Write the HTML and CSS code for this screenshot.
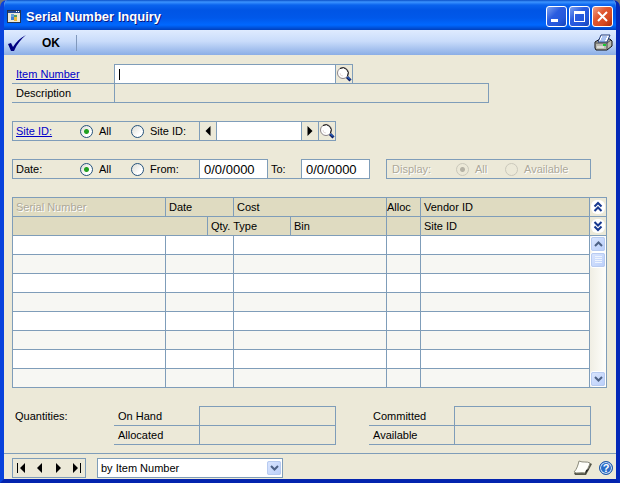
FILE: index.html
```html
<!DOCTYPE html>
<html lang="en">
<head>
<meta charset="utf-8">
<title>Serial Number Inquiry</title>
<link rel="stylesheet" href="styles.css">
</head>
<body>
<svg class="symbols" aria-hidden="true">
  <symbol id="lens" viewBox="0 0 16 18">
    <circle cx="7" cy="8" r="5.500" fill="#fff" stroke="#8d8589"/>
    <path d="M4 3.500A5.500 5.500 0 0 1 11.500 11" fill="none" stroke="#111"/>
    <path d="M4 8a3 3 0 0 0 3 3" fill="none" stroke="#e6dcdc"/>
    <path d="M11 12l3.500 3.500" stroke="#0a1c66" stroke-width="3"/>
    <path d="M11.500 12l2.500 2.500" stroke="#3c8cf0" stroke-width="1"/>
  </symbol>
  <symbol id="left" viewBox="0 0 6 10"><path d="M5.500 0v10L.5 5z"/></symbol>
  <symbol id="right" viewBox="0 0 6 10"><path d="M.5 0v10l5-5z"/></symbol>
</svg>
<div class="window">
  <header class="titlebar">
    <svg class="app-icon" viewBox="0 0 14 13" aria-hidden="true">
      <rect x=".5" y=".5" width="13" height="12" fill="#ece9d8" stroke="#24344f"/>
      <path d="M1 1h12v2H1z" fill="#244a94"/><path d="M9 1h1v1H9zM11 1h1v1h-1z" fill="#fff"/>
      <path d="M4 4h3v3H4z" fill="#6aa0d8"/><path d="M7 5h3v2H7z" fill="#4b9c66"/>
      <path d="M4 7h3v3H4z" fill="#3f7fd0"/><path d="M7 7h3v4H7z" fill="#e8b93c"/>
    </svg>
    <h1>Serial Number Inquiry</h1>
    <div class="controls">
      <button type="button" aria-label="Minimize"><svg viewBox="0 0 19 19"><path d="M4 12h7v3H4z" fill="#fff"/></svg></button>
      <button type="button" aria-label="Maximize"><svg viewBox="0 0 19 19"><path d="M4 4h11v11H4zm1 3v7h9V7z" fill="#fff" fill-rule="evenodd"/></svg></button>
      <button type="button" class="close" aria-label="Close"><svg viewBox="0 0 19 19"><path d="M5 5l9 9M14 5l-9 9" stroke="#fff" stroke-width="2"/></svg></button>
    </div>
  </header>
  <div class="toolbar">
    <button type="button" class="ok">
      <svg viewBox="0 0 20 18" aria-hidden="true"><path d="M1 10l3-1 2 4C9 8 13 4 19 1 14 5 10 10 7 17H4z" fill="#000080"/></svg>
      <span>OK</span>
    </button>
    <button type="button" class="print" aria-label="Print">
      <svg viewBox="0 0 19 17">
        <path d="M1 8l5-3h10l2 2v5l-5 4H2l-1-2z" fill="#b9b9b0" stroke="#111"/>
        <path d="M2 9h11l4-3M13 9v6" fill="none" stroke="#444"/>
        <path d="M4 8l3-7h9l-3 7z" fill="#fff" stroke="#223b77"/>
        <path d="M8 3h5M7 5h5M6 7h5" stroke="#5686df"/>
        <path d="M3 13h7" stroke="#fff"/><path d="M9 11h3" stroke="#18c934" stroke-width="2"/>
      </svg>
    </button>
  </div>

  <main class="form">
    <section class="stack">
      <div class="line">
        <label class="caption link" for="item">Item Number</label>
        <input class="cell item-input" id="item" type="text">
        <button type="button" class="cell small" aria-label="Look up item"><svg class="lens"><use href="#lens"/></svg></button>
      </div>
      <div class="line">
        <label class="caption" for="description">Description</label>
        <input class="cell description readonly" id="description" type="text" readonly>
      </div>
    </section>

    <div class="line">
      <fieldset class="cell choices">
        <a class="choice-name link" href="#site">Site ID:</a>
        <label class="first"><input type="radio" name="site" checked>All</label>
        <label><input type="radio" name="site">Site ID:</label>
      </fieldset>
      <button type="button" class="cell small" aria-label="Previous site"><svg class="arrow"><use href="#left"/></svg></button>
      <input class="cell site-input" id="site" type="text" aria-label="Site ID">
      <button type="button" class="cell small" aria-label="Next site"><svg class="arrow"><use href="#right"/></svg></button>
      <button type="button" class="cell small" aria-label="Look up site"><svg class="lens"><use href="#lens"/></svg></button>
    </div>

    <div class="line">
      <fieldset class="cell choices">
        <span class="choice-name">Date:</span>
        <label class="first"><input type="radio" name="date" checked>All</label>
        <label><input type="radio" name="date">From:</label>
      </fieldset>
      <input class="cell date" type="text" value="0/0/0000" aria-label="From date">
      <label class="to" for="to-date">To:</label>
      <input class="cell date" id="to-date" type="text" value="0/0/0000">
      <fieldset class="cell display" disabled>
        <span class="choice-name">Display:</span>
        <label class="first"><input type="radio" name="display" checked>All</label>
        <label><input type="radio" name="display">Available</label>
      </fieldset>
    </div>

    <div class="grid">
      <table>
        <colgroup><col class="c-serial"><col class="c-date"><col class="c-qty"><col class="c-type"><col class="c-bin"><col class="c-alloc"><col></colgroup>
        <thead>
          <tr><th class="off">Serial Number</th><th colspan="2">Date</th><th colspan="2">Cost</th><th class="tight">Alloc</th><th>Vendor ID</th></tr>
          <tr><th colspan="2"></th><th colspan="2">Qty. Type</th><th>Bin</th><th></th><th>Site ID</th></tr>
        </thead>
        <tbody>
          <tr><td></td><td colspan="2"></td><td colspan="2"></td><td></td><td></td></tr>
          <tr><td></td><td colspan="2"></td><td colspan="2"></td><td></td><td></td></tr>
          <tr><td></td><td colspan="2"></td><td colspan="2"></td><td></td><td></td></tr>
          <tr><td></td><td colspan="2"></td><td colspan="2"></td><td></td><td></td></tr>
          <tr><td></td><td colspan="2"></td><td colspan="2"></td><td></td><td></td></tr>
          <tr><td></td><td colspan="2"></td><td colspan="2"></td><td></td><td></td></tr>
          <tr><td></td><td colspan="2"></td><td colspan="2"></td><td></td><td></td></tr>
          <tr><td></td><td colspan="2"></td><td colspan="2"></td><td></td><td></td></tr>
        </tbody>
      </table>
      <div class="side">
        <button type="button" class="fold" aria-label="Hide detail"><svg viewBox="0 0 14 14"><path d="M3.500 6.500L7 3l3.500 3.500M3.500 11L7 7.500l3.500 3.500"/></svg></button>
        <button type="button" class="fold" aria-label="Show detail"><svg viewBox="0 0 14 14"><path d="M3.500 3L7 6.500 10.500 3M3.500 7.500L7 11l3.500-3.500"/></svg></button>
        <div class="scrollbar">
          <button type="button" class="scroll" aria-label="Scroll up"><svg viewBox="0 0 9 6"><path d="M1 5l3.500-3.500L8 5"/></svg></button>
          <div class="thumb"><svg viewBox="0 0 7 8"><path d="M0 .5h7M0 2.500h7M0 4.500h7M0 6.500h7" stroke="#eef4fe"/></svg></div>
          <button type="button" class="scroll down" aria-label="Scroll down"><svg viewBox="0 0 9 6"><path d="M1 1l3.500 3.500L8 1"/></svg></button>
        </div>
      </div>
    </div>

    <section class="quantities">
      <span class="heading">Quantities:</span>
      <div class="stack pair">
        <div class="line"><label class="caption" for="hand">On Hand</label><input class="cell amount readonly" id="hand" readonly></div>
        <div class="line"><label class="caption" for="allocated">Allocated</label><input class="cell amount readonly" id="allocated" readonly></div>
      </div>
      <div class="stack pair">
        <div class="line"><label class="caption" for="committed">Committed</label><input class="cell amount readonly" id="committed" readonly></div>
        <div class="line"><label class="caption" for="available">Available</label><input class="cell amount readonly" id="available" readonly></div>
      </div>
    </section>
  </main>

  <footer class="footer">
    <nav class="records" aria-label="Records">
      <button type="button" aria-label="First"><svg viewBox="0 0 10 10"><path d="M1 0h1v10H1zM9 0v10L4 5z"/></svg></button>
      <button type="button" aria-label="Previous"><svg viewBox="0 0 10 10"><path d="M7 0v10L2 5z"/></svg></button>
      <button type="button" aria-label="Next"><svg viewBox="0 0 10 10"><path d="M3 0v10l5-5z"/></svg></button>
      <button type="button" aria-label="Last"><svg viewBox="0 0 10 10"><path d="M8 0h1v10H8zM1 0v10l5-5z"/></svg></button>
    </nav>
    <div class="sort">
      <select aria-label="Sort order"><option>by Item Number</option></select>
      <span class="drop"><svg viewBox="0 0 9 6"><path d="M1 1l3.500 3.500L8 1"/></svg></span>
    </div>
    <div class="extras">
      <button type="button" aria-label="Note">
        <svg class="note" viewBox="0 0 19 16"><path d="M17 3l2 1-6 11H2l-1-2z" fill="#555648"/><path d="M6 1c4 2 8 0 11 2-1 4-3 7-5 10-4-1-8 1-11-1 3-3 4-7 5-11z" fill="#fffffa" stroke="#8c8c7c"/><path d="M12 14l1-4 3-1z" fill="#222"/></svg>
      </button>
      <button type="button" aria-label="Help" class="help">?</button>
    </div>
  </footer>
</div>
</body>
</html>
```
FILE: styles.css
```css
:root {
  --line: #7f9db9;
  --face: #ece9d8;
  --head: #dfdbc1;
}
* { box-sizing: border-box; }
body {
  margin: 0;
  background: #777;
  color: #000;
  font: 11px/18px "Liberation Sans", Arial, sans-serif;
}
button, input, select {
  margin: 0;
  padding: 0;
  border: 0;
  border-radius: 0;
  background: none;
  color: inherit;
  font: inherit;
}
button { display: flex; align-items: center; justify-content: center; }
svg { display: block; }
.symbols { display: none; }
.link { color: #0000c8; text-decoration: underline; }

.window {
  min-height: 100vh;
  border: 4px solid #0842dc;
  border-top: 0;
  border-right-color: #0428b8;
  border-bottom-color: #0424ae;
  border-radius: 7px 7px 0 0;
  background: var(--face);
  overflow: hidden;
}

.titlebar {
  display: flex;
  align-items: center;
  gap: 5px;
  height: 30px;
  margin: 0 -4px;
  padding: 3px 7px 0;
  background: linear-gradient(#0a50c8 0, #3c94ff 2px, #0a64ee 5px, #0055e5 10px, #0058ea 18px, #0068ff 25px, #0050d8 28px, #0040bc 30px);
}
.app-icon { width: 14px; height: 13px; }
.titlebar h1 {
  flex: 1;
  margin: 0;
  color: #fff;
  font-size: 13px;
  font-weight: bold;
  text-shadow: 1px 1px 0 #0a1883;
}
.controls { display: flex; gap: 2px; }
.controls button {
  width: 21px;
  height: 21px;
  border: 1px solid #fff;
  border-radius: 3px;
  background: linear-gradient(135deg, #7da2f0, #2a5ce0 40%, #2458dc 70%, #1644b8);
}
.controls .close { background: linear-gradient(135deg, #f0a088, #e0562f 40%, #d64a22 70%, #aa2c0c); }
.controls svg { width: 19px; height: 19px; }

.toolbar {
  display: flex;
  align-items: center;
  justify-content: space-between;
  height: 25px;
  padding: 0 3px;
  background: linear-gradient(#dfebff, #c9dcfa 45%, #8baee6);
}
.ok {
  gap: 15px;
  height: 16px;
  padding-right: 16px;
  border-right: 1px solid #8098bc;
  font-size: 12px;
  font-weight: bold;
}
.ok svg { width: 20px; height: 18px; }
.print svg { width: 19px; height: 17px; }

.form {
  display: flex;
  flex-direction: column;
  gap: 18px;
  padding: 9px 9px 8px 8px;
}
.line { display: flex; }
.stack .line + .line { margin-top: -1px; }
.cell {
  height: 20px;
  margin: 0 -1px 0 0;
  border: 1px solid var(--line);
}
input.cell { padding: 0 4px; background: #fff; }
input.readonly { background: none; }
.small { width: 18px; }
.caption {
  width: 102px;
  height: 20px;
  padding: 1px 4px 0;
  border-bottom: 1px solid var(--line);
}
.lens { width: 16px; height: 18px; }
.arrow { width: 6px; height: 10px; }
.item-input { width: 222px; }
input.item-input {
  background: linear-gradient(#000, #000) 4px 4px / 1px 11px no-repeat #fff;
}
.description { width: 375px; }
.site-input { width: 86px; }
.date { width: 69px; font-size: 13px; }
.to {
  width: 35px;
  height: 20px;
  margin-right: -1px;
  padding: 1px 4px 0;
  border-bottom: 1px solid var(--line);
}

fieldset { display: flex; min-width: 0; padding: 0; }
.choices { width: 188px; }
.choice-name { width: 67px; padding-left: 3px; }
fieldset label { display: flex; align-items: center; gap: 6px; }
.first { width: 51px; }
input[type="radio"] {
  flex: none;
  width: 13px;
  height: 13px;
  appearance: none;
  border: 1px solid #24527c;
  border-radius: 50%;
  background: linear-gradient(135deg, #dcdcd4, #fff 70%);
}
input[type="radio"]:checked {
  background: radial-gradient(circle at 50% 50%, #21a121 0 2px, #fff0 3px), linear-gradient(135deg, #dcdcd4, #fff 70%);
}
.display { width: 205px; margin-left: 17px; }
.display .choice-name { width: 69px; padding-left: 5px; }
.display .first { width: 49px; }
.display, .off { color: #aca899; text-shadow: 1px 1px 0 #fff; }
.display input[type="radio"] { border-color: #cac8bb; background: none; }
.display input[type="radio"]:checked { background: radial-gradient(circle at 50% 50%, #b5b2a5 0 2px, #fff0 3px); }

.grid { display: flex; }
table {
  flex: 1;
  width: 0;
  border-collapse: separate;
  border-spacing: 0;
  border-top: 1px solid var(--line);
  border-left: 1px solid var(--line);
  table-layout: fixed;
}
.c-serial { width: 153px; }
.c-date { width: 42px; }
.c-qty { width: 26px; }
.c-type { width: 57px; }
.c-bin { width: 96px; }
.c-alloc { width: 34px; }
th, td {
  height: 19px;
  padding: 0 3px;
  border-right: 1px solid var(--line);
  border-bottom: 1px solid var(--line);
  font-weight: normal;
  text-align: left;
  white-space: nowrap;
}
th { background: var(--head); }
th.tight { padding: 0; }
td { background: #fff; }
tr:nth-child(even) td { background: #f7f7f3; }
.side {
  display: flex;
  flex-direction: column;
  width: 17px;
  border: solid var(--line);
  border-width: 1px 1px 1px 0;
}
.fold {
  height: 19px;
  border-bottom: 1px solid var(--line);
}
.fold svg { width: 14px; height: 14px; border-radius: 6px; background: #fff; }
.fold path { fill: none; stroke: #16388f; stroke-width: 2; }
.scrollbar {
  display: flex;
  flex: 1;
  flex-direction: column;
  background: linear-gradient(90deg, #f0eee4, #fefefb);
}
.scroll, .thumb, .drop {
  display: flex;
  align-items: center;
  justify-content: center;
  width: 16px;
  height: 16px;
  border: 1px solid #fff;
  border-radius: 3px;
  outline: 1px solid #b8cbf0;
  outline-offset: -2px;
  background: linear-gradient(135deg, #dbe6fe, #b9cefa);
}
.down { margin-top: auto; }
.scroll svg, .drop svg { width: 9px; height: 6px; }
.scroll path, .drop path { fill: none; stroke: #4d6185; stroke-width: 2; }
.thumb svg { width: 7px; height: 8px; }

.quantities { display: flex; gap: 33px; }
.heading { width: 69px; padding: 1px 3px 0; }
.pair .caption { width: 85px; }
.amount { width: 137px; }
.pair .cell { margin: 0; }

.footer {
  display: flex;
  gap: 11px;
  padding: 4px 8px 1px;
  border-top: 1px solid var(--line);
}
.records {
  display: flex;
  align-items: center;
  justify-content: space-between;
  width: 74px;
  height: 20px;
  padding: 0 3px;
  border: 1px solid var(--line);
}
.records svg { width: 10px; height: 10px; }
.sort { position: relative; width: 186px; }
.sort select {
  width: 100%;
  height: 20px;
  padding: 0 20px 0 3px;
  appearance: none;
  border: 1px solid var(--line);
  background: #fff;
}
.drop {
  position: absolute;
  top: 2px;
  right: 1px;
  pointer-events: none;
}
.extras { display: flex; align-items: center; gap: 7px; margin: 0 -5px 0 auto; }
.note { width: 19px; height: 16px; }
.help {
  width: 14px;
  height: 14px;
  border: 1px solid #1d56a8;
  border-radius: 50%;
  box-shadow: inset 0 0 0 1px #dce9fa;
  background: #2a6cc8;
  color: #fff;
  font-size: 11px;
  font-weight: bold;
}
```
